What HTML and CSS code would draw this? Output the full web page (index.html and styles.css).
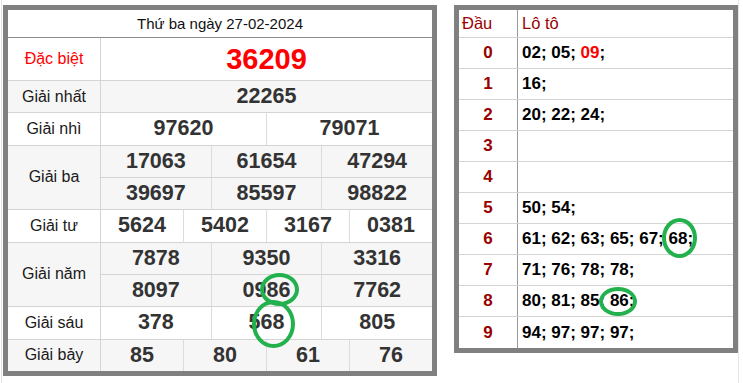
FILE: index.html
```html
<!DOCTYPE html>
<html lang="vi">
<head>
<meta charset="utf-8">
<title>Kết quả xổ số</title>
<link rel="stylesheet" href="styles.css">
</head>
<body>
<div class="page">
  <div class="kq">
    <div class="kq-head">Thứ ba ngày 27-02-2024</div>
    <div class="prize special">
      <div class="label red">Đặc biệt</div>
      <div class="vals"><div class="line"><span class="num big">36209</span></div></div>
    </div>
    <div class="prize alt">
      <div class="label">Giải nhất</div>
      <div class="vals"><div class="line"><span class="num">22265</span></div></div>
    </div>
    <div class="prize">
      <div class="label">Giải nhì</div>
      <div class="vals"><div class="line"><span class="num">97620</span><span class="num">79071</span></div></div>
    </div>
    <div class="prize alt">
      <div class="label">Giải ba</div>
      <div class="vals">
        <div class="line"><span class="num">17063</span><span class="num">61654</span><span class="num">47294</span></div>
        <div class="line"><span class="num">39697</span><span class="num">85597</span><span class="num">98822</span></div>
      </div>
    </div>
    <div class="prize">
      <div class="label">Giải tư</div>
      <div class="vals"><div class="line"><span class="num">5624</span><span class="num">5402</span><span class="num">3167</span><span class="num">0381</span></div></div>
    </div>
    <div class="prize alt">
      <div class="label">Giải năm</div>
      <div class="vals">
        <div class="line"><span class="num">7878</span><span class="num">9350</span><span class="num">3316</span></div>
        <div class="line"><span class="num">8097</span><span class="num">0986</span><span class="num">7762</span></div>
      </div>
    </div>
    <div class="prize">
      <div class="label">Giải sáu</div>
      <div class="vals"><div class="line"><span class="num">378</span><span class="num">568</span><span class="num">805</span></div></div>
    </div>
    <div class="prize alt last">
      <div class="label">Giải bảy</div>
      <div class="vals"><div class="line"><span class="num">85</span><span class="num">80</span><span class="num">61</span><span class="num">76</span></div></div>
    </div>
  </div>

  <div class="lt">
    <div class="lt-row lt-head"><div class="dau">Đầu</div><div class="loto">Lô tô</div></div>
    <div class="lt-row"><div class="dau">0</div><div class="loto">02; 05; <span class="red">09</span>;</div></div>
    <div class="lt-row"><div class="dau">1</div><div class="loto">16;</div></div>
    <div class="lt-row"><div class="dau">2</div><div class="loto">20; 22; 24;</div></div>
    <div class="lt-row"><div class="dau">3</div><div class="loto"></div></div>
    <div class="lt-row"><div class="dau">4</div><div class="loto"></div></div>
    <div class="lt-row"><div class="dau">5</div><div class="loto">50; 54;</div></div>
    <div class="lt-row"><div class="dau">6</div><div class="loto">61; 62; 63; 65; 67; 68;</div></div>
    <div class="lt-row"><div class="dau">7</div><div class="loto">71; 76; 78; 78;</div></div>
    <div class="lt-row"><div class="dau">8</div><div class="loto">80; 81; 85; 86;</div></div>
    <div class="lt-row"><div class="dau">9</div><div class="loto">94; 97; 97; 97;</div></div>
  </div>
</div>

<span class="mark m1"></span>
<span class="mark m2"></span>
<span class="mark m3"></span>
<span class="mark m4"></span>
</body>
</html>
```

FILE: styles.css
```css
html, body {
  margin: 0;
  padding: 0;
  background: #ffffff;
}

body {
  position: relative;
  width: 743px;
  height: 383px;
  overflow: hidden;
  font-family: "Liberation Sans", Arial, sans-serif;
  color: #222222;
}

.page {
  display: flex;
  align-items: flex-start;
  gap: 17px;
  margin-left: 1px;
  width: 735px;
  height: 383px;
  padding: 5px 0 0 1px;
  border-left: 1px solid #e4e4e4;
  border-right: 1px solid #e4e4e4;
}

/* ---------- left: results table ---------- */
.kq {
  width: 434px;
  box-sizing: border-box;
  border: 5px solid #808080;
  background: #ffffff;
}

.kq-head {
  height: 28px;
  box-sizing: border-box;
  border-bottom: 1px solid #8c8c8c;
  display: flex;
  align-items: center;
  justify-content: center;
  font-size: 15px;
  color: #111111;
}

.prize {
  display: flex;
  border-bottom: 1px solid #d4d4d4;
}

.prize.alt {
  background: #f6f6f6;
}

.prize.last {
  border-bottom: none;
}

.label {
  width: 93px;
  flex: none;
  box-sizing: border-box;
  border-right: 1px solid #d4d4d4;
  display: flex;
  align-items: center;
  justify-content: center;
  font-size: 16px;
  color: #1a1a1a;
}

.label.red {
  color: #ff0000;
}

.vals {
  flex: 1;
  display: flex;
  flex-direction: column;
}

.line {
  display: flex;
  height: 31.33px;
}

.line + .line {
  border-top: 1px solid #d4d4d4;
}

.special .line {
  height: 42px;
}

.num {
  flex: 1 1 0;
  display: flex;
  align-items: center;
  justify-content: center;
  font-weight: bold;
  font-size: 21.5px;
  color: #333333;
}

.num + .num {
  border-left: 1px solid #dcdcdc;
}

.num.big {
  font-size: 29px;
  color: #ff0000;
}

/* ---------- right: lô tô table ---------- */
.lt {
  width: 284px;
  box-sizing: border-box;
  border: 5px solid #808080;
  background: #ffffff;
}

.lt-row {
  display: flex;
  height: 31px;
  box-sizing: border-box;
  border-bottom: 1px solid #d4d4d4;
}

.lt-row:last-child {
  border-bottom: none;
}

.lt-head {
  height: 28px;
}

.dau {
  width: 59px;
  flex: none;
  box-sizing: border-box;
  border-right: 1px solid #9a9a9a;
  display: flex;
  align-items: center;
  justify-content: center;
  font-size: 17px;
  font-weight: bold;
  color: #990000;
}

.loto {
  flex: 1;
  display: flex;
  align-items: center;
  padding-left: 4px;
  font-size: 17px;
  font-weight: bold;
  color: #000000;
  white-space: pre;
}

.lt-head .dau {
  justify-content: flex-start;
  padding-left: 3px;
  font-weight: normal;
  font-size: 16.5px;
}

.lt-head .loto {
  font-weight: normal;
  font-size: 16.5px;
  color: #990000;
}

.red {
  color: #ff0000;
}

/* ---------- hand-drawn green marks ---------- */
.mark {
  position: absolute;
  box-sizing: border-box;
  border: 4px solid #22b14c;
  border-radius: 50%;
}

.m1 { left: 260px; top: 273px; width: 39px; height: 33px; }
.m2 { left: 252px; top: 300px; width: 43px; height: 48px; }
.m3 { left: 662px; top: 218px; width: 35px; height: 40px; }
.m4 { left: 599px; top: 287px; width: 38px; height: 29px; }
```
